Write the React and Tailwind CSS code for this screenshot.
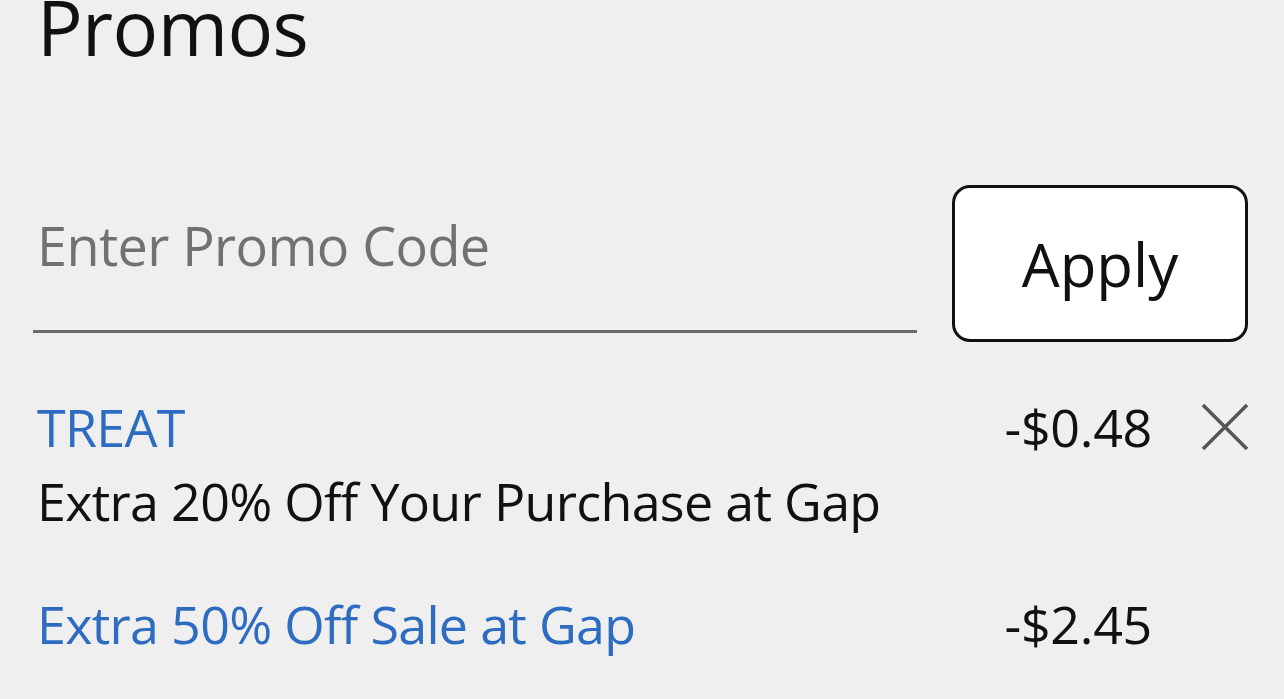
import { useState } from "react";

const promos = [
  { code: "TREAT", desc: "Extra 20% Off Your Purchase at Gap", amount: "-$0.48", removable: true },
  { code: null, desc: "Extra 50% Off Sale at Gap", amount: "-$2.45", removable: false },
];

const CloseIcon = () => (
  <svg width="50" height="48" viewBox="0 0 50 48" fill="none" stroke="#555" strokeWidth="3.5">
    <path d="M3 2 L47 46 M47 2 L3 46" />
  </svg>
);

export default function App() {
  const [code, setCode] = useState("");

  return (
    <div className="w-[1284px] h-[699px] overflow-hidden bg-[#efefef] text-[#111]" style={{ fontFamily: "'Open Sans', 'Noto Sans', sans-serif" }}>
      <h1 className="pl-[37px] text-[76px] leading-[50px] tracking-[-0.6px] font-normal pt-[2px]">Promos</h1>

      {/* campo de código + botón */}
      <div className="mt-[133px] flex items-start pl-[33px] pr-[36px] gap-[35px]">
        <div className="flex-1 h-[148px] border-b-[3px] border-[#6b6b6b]">
          <input
            value={code}
            onChange={(e) => setCode(e.target.value)}
            placeholder="Enter Promo Code"
            className="mt-[30px] w-full h-[60px] pl-[4px] bg-transparent outline-none text-[54px] leading-[60px] tracking-[-0.6px] placeholder:text-[#717171]"
          />
        </div>
        <button className="w-[296px] h-[157px] bg-white border-[3px] border-[#111] rounded-[18px] flex items-center justify-center text-[60px] leading-[60px]">
          Apply
        </button>
      </div>

      <div className="mt-[48px] pl-[37px] pr-[34px] flex flex-col gap-[49px]">
        {promos.map((p, i) => (
          <div key={i} className="flex items-start text-[52px] leading-[74px] tracking-[-0.7px]">
            <div className="flex-1">
              {p.code && <div className="text-[#2d6cc0]">{p.code}</div>}
              <div className={p.code ? "text-[#111]" : "text-[#2d6cc0]"}>{p.desc}</div>
            </div>
            <div className="tracking-[-0.3px]">{p.amount}</div>
            <div className="w-[98px] h-[74px] flex items-center justify-end">
              {p.removable && <CloseIcon />}
            </div>
          </div>
        ))}
      </div>
    </div>
  );
}
